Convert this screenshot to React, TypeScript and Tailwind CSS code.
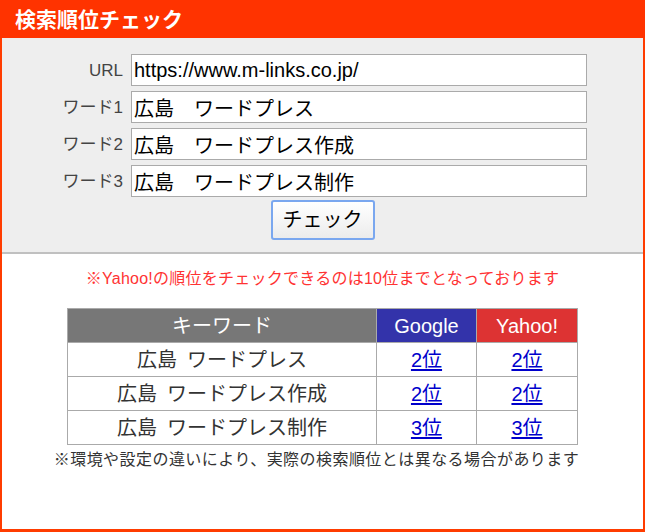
import { useState } from "react";

const jp = { fontFamily: '"Liberation Sans", "Noto Sans CJK JP", sans-serif' };

const rows = [
  { word: "広島\u2002ワードプレス", google: "2位", yahoo: "2位" },
  { word: "広島\u2002ワードプレス作成", google: "2位", yahoo: "2位" },
  { word: "広島\u2002ワードプレス制作", google: "3位", yahoo: "3位" },
];

function Field({ label, value, onChange }: { label: string; value: string; onChange: (v: string) => void }) {
  return (
    <div className="flex items-center">
      <label className="w-[121px] pt-[2px] text-right text-[17px] text-[#444]">{label}</label>
      <input
        value={value}
        onChange={(e) => onChange(e.target.value)}
        className="ml-[8px] h-[32px] w-[456px] border border-[#aaa] bg-white px-[2px] text-[20px] text-black outline-none"
        style={jp}
      />
    </div>
  );
}

export default function App() {
  const [url, setUrl] = useState("https://www.m-links.co.jp/");
  const [w1, setW1] = useState("広島　ワードプレス");
  const [w2, setW2] = useState("広島　ワードプレス作成");
  const [w3, setW3] = useState("広島　ワードプレス制作");

  return (
    <div className="flex h-[532px] w-[645px] flex-col border-x-2 border-b-[3px] border-[#ff3c00] bg-white" style={jp}>
      <div className="-mx-[2px] flex h-[38px] shrink-0 items-center bg-[#ff3300] px-[15px]">
        <h1 className="text-[21px] font-bold leading-none text-white">検索順位チェック</h1>
      </div>

      <form
        onSubmit={(e) => e.preventDefault()}
        className="flex flex-col gap-[5px] border-b-2 border-[#c0c0c0] bg-[#eeeeee] pt-[16px] pb-[12px]"
      >
        <Field label="URL" value={url} onChange={setUrl} />
        <Field label="ワード1" value={w1} onChange={setW1} />
        <Field label="ワード2" value={w2} onChange={setW2} />
        <Field label="ワード3" value={w3} onChange={setW3} />
        <div className="-mt-[2px] flex justify-center">
          <button
            type="submit"
            className="h-[40px] w-[104px] rounded-[3px] border-2 border-[#7aa7ef] bg-gradient-to-b from-white to-[#ececec] text-[20px] text-black"
          >
            チェック
          </button>
        </div>
      </form>

      <p className="mt-[13px] text-center text-[16px] leading-[24px] tracking-[0.25px] text-[#ff3333]">
        ※Yahoo!の順位をチェックできるのは10位までとなっております
      </p>

      <table className="mx-auto mt-[17px] w-[511px] border-collapse text-center">
        <thead>
          <tr className="h-[34px] text-[20px] text-white">
            <th className="border border-[#aaa] bg-[#777777] font-normal">キーワード</th>
            <th className="w-[100px] border border-[#aaa] bg-[#3333aa] font-normal">Google</th>
            <th className="w-[101px] border border-[#aaa] bg-[#dd3333] font-normal">Yahoo!</th>
          </tr>
        </thead>
        <tbody>
          {rows.map((r, i) => (
            <tr key={i} className="h-[34px] text-[20px]">
              <td className="border border-[#aaa] text-[#333]">{r.word}</td>
              <td className="border border-[#aaa]">
                <a href="#" className="text-[#0000cc] underline decoration-2 underline-offset-2">
                  {r.google}
                </a>
              </td>
              <td className="border border-[#aaa]">
                <a href="#" className="text-[#0000cc] underline decoration-2 underline-offset-2">
                  {r.yahoo}
                </a>
              </td>
            </tr>
          ))}
        </tbody>
      </table>

      <p className="mt-[3px] pr-[12px] text-center text-[16px] leading-[24px] tracking-[0.45px] text-[#333]">
        ※環境や設定の違いにより、実際の検索順位とは異なる場合があります
      </p>
    </div>
  );
}
